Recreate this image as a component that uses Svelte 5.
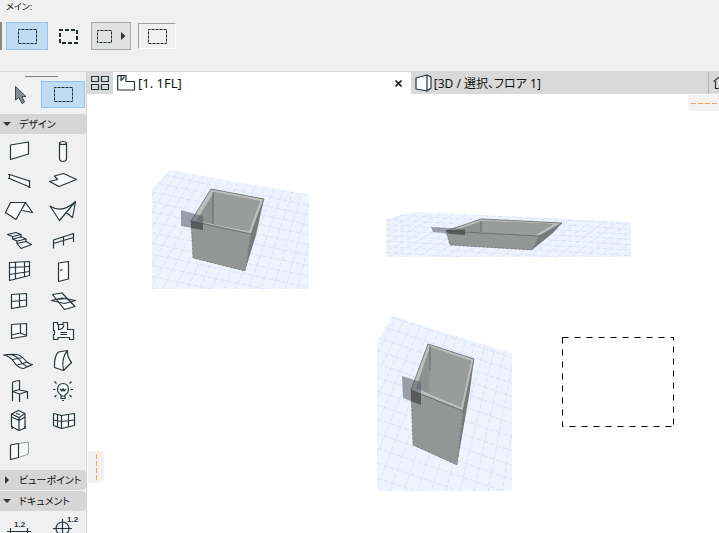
<script>
  // Tool icons are drawn in a 43 x 30 cell.
  const designTools = [
    { name: '壁', d: 'M10.5 9L28.5 6V18L10.5 23.5Z' },
    { name: '柱', d: 'M16.5 7V23Q17 25.5 20 25.5T23.5 23V7M16.5 7Q17 5.5 20 5.5T23.5 7T20 8.5T16.5 7' },
    { name: '梁', d: 'M9.5 8.5L29.5 15V21L9.5 12.5Z', line: 'M8 8.5H10M8 12.5H10M28.5 15H30.5M28.5 21.5H30.5' },
    { name: 'スラブ', d: 'M11.5 10L20.5 7.5L33.5 13.5L16 20.5L6.5 15.5L14.5 13.5Z' },
    { name: '屋根', d: 'M10.5 6.5H25.5L16 23.5L5.5 16.5ZM25.5 6.5L32.5 16.5L22.5 14.5' },
    { name: 'シェル', d: 'M7 10Q19 18 32.5 5.5L16.5 24.5ZM32.5 5.5L29.5 21.5L23 16.5' },
    { name: '階段', d: 'M7.5 8.5L16 6.5L21 8.5L12.5 10.5ZM12.5 13L21.5 11L26 13L17 15ZM17 17.5L26 15.5L31.5 18.5L21 22.5Z', line: 'M12.5 10.5V13M21 8.5V11M17 15V17.5M26 13V15.5' },
    { name: '手摺り', line: 'M10.5 22.5V14L30.5 7.5V16M20.5 10.5V19.5M10.5 17.5L30.5 11.5' },
    { name: 'カーテンウォール', d: 'M9.5 6.5L29.5 5.5V19.5L9.5 24.5Z', line: 'M15.5 6V23M24.5 6V21M9.5 11.5L29.5 10.5M9.5 18.5L29.5 15.5' },
    { name: 'ドア', d: 'M15.5 7L25.5 5.5V23L15.5 25.5Z', line: 'M17 14.5L19.5 13.5' },
    { name: '窓', d: 'M11.5 8.5L26.5 7.5V20L11.5 22.5Z', line: 'M19.5 8V21M11.5 15.5L26.5 14' },
    { name: '天窓', d: 'M9.5 8.5L19 7L32 20.5L21.5 23.5Z', line: 'M8.5 14.5L19 12L32.5 14.5L21.5 17.5ZM14 13.5L24 12.5' },
    { name: 'コーナー窓', d: 'M11.5 8.5L26.5 7.5V20L11.5 22.5Z', line: 'M20.5 8V17L11.5 19M20.5 17L26.5 19.5' },
    { name: 'ゾーン', d: 'M10.5 6.5H14.5V8.5H20V6.5H24.5V13.5H30.5V23.5H26.5V21.5H15V23.5H10.5V18.5H11.5V14.5H10.5Z', line: 'M15.5 9V13.5Q20.5 13.5 21 8.5M17.5 16.5H24M17.5 18.5H24' },
    { name: 'メッシュ', d: 'M3.5 9Q10 8 16 8.5Q21 9 24.5 13.5T32.5 18.5L23.5 22.5Q18 22 14 16T3.5 9Z', line: 'M9 8.5Q16 9 20 14.5T28 20.5M12.5 13.5L23 11.5M17.5 19L27.5 16' },
    { name: 'モルフ', d: 'M11.5 21.5Q11 10 15.5 6L24.5 4.5Q24 11 28.5 16.5L20.5 24.5Z', line: 'M24.5 4.5Q18 12 20.5 24.5' },
    { name: 'オブジェクト', line: 'M12.5 25V7Q13 5 19.5 4.5V14L27.5 15.5V23M12.5 15.5L19.5 18L27.5 15.5M19.5 18V26M12.5 15.5L19.5 13.5' },
    { name: 'ランプ', d: 'M18 22.5V19Q14.5 17 14.5 13Q15 7.5 20 7.5T25.5 13Q25.5 17 22 19V22.5Z', line: 'M18 20H22M17 13L19 15L20 12.5L21 15L23 13M10 13.5H12.5M27.5 13.5H30M11.5 5.5L13.5 7.5M28.5 5.5L26.5 7.5M11.5 21L13.5 19M28.5 21L26.5 19M19 24.5H21' },
    { name: '設備', d: 'M11.5 8L18.5 4.5L25 7.5V22L19 24.5L11.5 20.5Z', line: 'M11.5 8L19 11.5L25 7.5M11.5 11L19 14.5L25 11M19 11.5V24.5M12 20V23M25 20V23M16 7.5L20 8.5' },
    { name: 'コーナーカーテンウォール', d: 'M10.5 7.5L18.5 9.5L31.5 7.5V19.5L18.5 22.5L10.5 19.5Z', line: 'M18.5 9.5V22.5M14.5 8.5V21M25.5 8.5V21M10.5 14L18.5 15.5L31.5 14' },
    { name: '開口', d: 'M10.5 9L18.5 7.5V21.5L10.5 23.5Z', soft: 'M18.5 7.5L28.5 6V18L18.5 21.5' }
  ];

  const line = (a, b) => `M${a[0]} ${a[1]}L${b[0]} ${b[1]}`;

  // Perspective floor grid: one set of lines along the far edge, one fanning towards the viewer.
  function floorGrid(w, h, step, slope, lean, fan, cols) {
    let along = '';
    for (let y = -h, gap = step; y < h * 1.6; y += gap, gap += step / 40) {
      along += line([0, y], [w, y + w * slope]);
    }
    let across = '';
    for (let i = 0; i <= cols; i++) {
      const x = (i / cols) * w * 2;
      across += line([x, 0], [x - lean + (x / w) * fan, h]);
    }
    return { along, across };
  }

  const views = [
    {
      id: 'v1', x: 65, y: 75, w: 157, h: 120,
      floor: '18,1 157,26 157,120 0,120 0,19',
      grid: floorGrid(157, 120, 7, 0.21, 88, 52, 34),
      outer: '59,20 112,30 99,65 39,52', inner: '62,23 108,32 97,62 44,52',
      front: '39,52 99,65 93,102 41,89', side: '99,65 112,30 104,66 93,102',
      back: '62,23 108,32 97,62 60,55', corner: 'M61 23V55',
      plane: '29,41 51,47 51,61 29,57', overlap: '39,52 51,54 51,61 39,59'
    },
    {
      id: 'v2', x: 299, y: 117, w: 245, h: 46,
      floor: '0,8 27,1 245,11 245,46 0,46',
      grid: floorGrid(245, 46, 4, 0.06, 95, 35, 40),
      outer: '95,8 176,12 153,25 60,20', inner: '96,10 168,13 149,24 67,20',
      front: '60,20 153,25 146,39 64,34', side: '153,25 176,12 167,22 146,39',
      back: '95,10 168,13 149,24 94,21', corner: 'M95 10V21',
      plane: '45,16 79,18 79,24 47,21', overlap: '61,19 79,19 79,24 63,23'
    },
    {
      id: 'v3', x: 290, y: 222, w: 135, h: 175,
      floor: '15,0 135,37 135,175 0,175 0,26',
      grid: floorGrid(135, 175, 9, 0.34, 100, 62, 28),
      outer: '51,28 97,43 86,95 34,74', inner: '53,31 94,45 84,91 39,72',
      front: '34,74 86,95 80,149 36,129', side: '86,95 97,43 93,74 80,149',
      back: '53,31 94,45 84,91 52,78', corner: 'M53 30V55',
      plane: '25,60 44,66 44,89 26,82', overlap: '34,74 44,78 44,89 34,85'
    }
  ];
</script>

{#snippet marquee(w, h, weight)}
  <svg width={w} height={h} viewBox="0 0 {w} {h}" aria-hidden="true">
    <rect x={weight / 2} y={weight / 2} width={w - weight} height={h - weight} fill="none" stroke="#1d2a30" stroke-width={weight} stroke-dasharray={weight > 1 ? '4 2' : '3 1'} stroke-dashoffset="1" />
  </svg>
{/snippet}

<div class="app">
  <header class="toolbar">
    <div class="caption">メイン:</div>
    <div class="options">
      <button class="option chosen" aria-label="選択範囲">{@render marquee(19, 15, 1)}</button>
      <button class="option flat" aria-label="太い選択範囲">{@render marquee(19, 15, 2)}</button>
      <button class="option menu" aria-label="選択方法">
        {@render marquee(15, 13, 1)}
        <svg width="5" height="8" viewBox="0 0 5 8" aria-hidden="true"><path d="M0 0L4.5 4L0 8Z" fill="#333" /></svg>
      </button>
      <button class="option sunken" aria-label="矩形">{@render marquee(19, 15, 1)}</button>
    </div>
  </header>

  <div class="body">
    <aside class="palette">
      <div class="grip"></div>
      <div class="pair">
        <button class="pick" aria-label="矢印">
          <svg width="13" height="20" viewBox="0 0 13 20" aria-hidden="true">
            <path d="M1.5 1.5V15L5 12.5L8 18.5L10.5 17L8 11.5H12Z" fill="#858b8e" stroke="#3f4a50" />
          </svg>
        </button>
        <button class="pick chosen" aria-label="選択範囲ツール">{@render marquee(19, 15, 1)}</button>
      </div>

      <button class="section"><span class="arrow down"></span>デザイン</button>
      <div class="tools design">
        {#each designTools as tool}
          <button class="tool" aria-label={tool.name}>
            <svg width="43" height="30" viewBox="0 0 43 30" aria-hidden="true">
              {#if tool.soft}<path d={tool.soft} class="soft" />{/if}
              {#if tool.d}<path d={tool.d} class="ink face" />{/if}
              {#if tool.line}<path d={tool.line} class="ink" />{/if}
            </svg>
          </button>
        {/each}
      </div>
      <button class="section"><span class="arrow right"></span>ビューポイント</button>
      <button class="section"><span class="arrow down"></span>ドキュメント</button>
      <div class="tools">
        <button class="tool" aria-label="寸法">
          <svg width="43" height="30" viewBox="0 0 43 30" aria-hidden="true">
            <text x="14" y="14">1.2</text>
            <path d="M7 18.5H31M10.5 15V22M27.5 15V22" class="ink" />
          </svg>
        </button>
        <button class="tool" aria-label="レベル寸法">
          <svg width="43" height="30" viewBox="0 0 43 30" aria-hidden="true">
            <path d="M10 15.5H29M19.5 6V26M26 15.5A6.5 6.5 0 1 1 13 15.5A6.5 6.5 0 1 1 26 15.5" class="ink" />
            <text x="24" y="9">1.2</text>
          </svg>
        </button>
      </div>
    </aside>

    <main class="work">
      <nav class="tabs">
        <button class="overview" aria-label="タブ一覧">
          <svg width="18" height="14" viewBox="0 0 18 14" aria-hidden="true">
            <path d="M.5 .5H7.5V5.5H.5ZM10.5 .5H17.5V5.5H10.5ZM.5 8.5H7.5V13.5H.5ZM10.5 8.5H17.5V13.5H10.5Z" class="ink" />
          </svg>
        </button>
        <div class="tab active">
          <button class="title">
            <svg width="19" height="16" viewBox="0 0 19 16" aria-hidden="true">
              <path d="M.7 .7H9V6.5H17.5V15H.7ZM4 1V5.5L7.5 2" class="ink" />
            </svg>
            [1. 1FL]
          </button>
          <button class="close" aria-label="閉じる">
            <svg width="7" height="7" viewBox="0 0 7 7" aria-hidden="true"><path d="M.5 .5L6.5 6.5M6.5 .5L.5 6.5" stroke="#222" stroke-width="1.6" /></svg>
          </button>
        </div>
        <button class="tab title model">
          <svg width="17" height="18" viewBox="0 0 17 18" aria-hidden="true">
            <path d="M1 4L12 1L16 3V14L12 17L1 15ZM12 1V17" class="ink face" />
          </svg>
          [3D / 選択、フロア 1]
        </button>
        <button class="tab next" aria-label="立面図">
          <svg width="14" height="14" viewBox="0 0 14 14" aria-hidden="true"><path d="M.5 5.5L7 .5L13.5 5.5M2.5 5V12.5H12" class="ink" /></svg>
        </button>
      </nav>

      <div class="canvas">
        {#each views as v}
          <svg class="view" style="left: {v.x}px; top: {v.y}px" width={v.w} height={v.h} viewBox="0 0 {v.w} {v.h}" role="img" aria-label="3D">
            <clipPath id={v.id}><polygon points={v.floor} /></clipPath>
            <g clip-path="url(#{v.id})">
              <rect width={v.w} height={v.h} fill="#eef3fe" />
              <path d={v.grid.along} class="grid" />
              <path d={v.grid.across} class="grid" />
            </g>
            <polygon points={v.side} fill="#777b7b" />
            <polygon points={v.front} fill="#929695" />
            <polygon points={v.outer} fill="#bbbfbe" stroke="#626766" stroke-width=".8" />
            <polygon points={v.inner} fill="#8d9190" />
            <polygon points={v.back} fill="#989c9b" />
            <path d={v.corner} stroke="#656a69" fill="none" />
            <polygon points={v.front} class="edge" />
            <polygon points={v.plane} fill="#555962" fill-opacity=".55" />
            <polygon points={v.overlap} fill="#454747" fill-opacity=".55" />
          </svg>
        {/each}
        <svg class="view selection" width="113" height="91" viewBox="0 0 113 91" role="img" aria-label="選択範囲">
          <path d="M.5 .5H111.5V89.5" />
          <path d="M.5 .5V89.5H111.5" />
        </svg>
        <div class="dock side"></div>
        <div class="dock top"></div>
      </div>
    </main>
  </div>
</div>

<style>
  :global(body) { margin: 0; }
  .app {
    display: flex;
    flex-direction: column;
    height: 100vh;
    overflow: hidden;
    background: #f0f0f0;
    color: #111;
    font-family: "Noto Sans", "Noto Sans CJK JP", sans-serif;
    font-size: 13px;
    font-feature-settings: "palt";
  }
  button {
    padding: 0;
    border: 0;
    background: none;
    color: inherit;
    font: inherit;
    font-feature-settings: inherit;
    box-sizing: border-box;
  }
  svg { display: block; flex: none; }
  .toolbar {
    flex: none;
    height: 72px;
    box-sizing: border-box;
    border-bottom: 1px solid #d8d8d8;
  }
  .caption {
    height: 22px;
    padding-left: 6px;
    font-size: 9px;
    line-height: 13px;
    box-sizing: border-box;
  }
  .options {
    display: flex;
    align-items: center;
    height: 28px;
    padding-left: 4px;
    border-left: 2px solid #8b8b8b;
  }
  .option {
    display: flex;
    align-items: center;
    justify-content: center;
    width: 42px;
    height: 28px;
    flex: none;
  }
  .chosen { background: #c0dcf3; border: 1px solid #8cc4f5; }
  .flat { width: 41px; }
  .menu {
    width: 40px;
    gap: 9px;
    margin: 0 7px 0 2px;
    background: #e1e1e1;
    border: 1px solid #a9a9a9;
  }
  .sunken {
    width: 38px;
    height: 26px;
    border: 1px solid #a0a0a0;
    border-right-color: #fff;
    border-bottom-color: #fff;
  }
  .body { display: flex; flex: 1; min-height: 0; }
  .palette {
    flex: none;
    width: 87px;
    box-sizing: border-box;
    border-right: 1px solid #d2d2d2;
    overflow: hidden;
  }
  .grip { width: 33px; height: 1px; margin: 4px 0 4px 25px; background: #808080; }
  .pair { display: flex; height: 27px; margin-bottom: 6px; }
  .pick { display: flex; align-items: center; justify-content: center; width: 41px; height: 27px; }
  .pick.chosen { width: 44px; }
  .section {
    display: flex;
    align-items: center;
    width: 100%;
    height: 20px;
    margin-bottom: 1px;
    background: #d6d6d6;
    border-radius: 0 4px 4px 0;
    font-size: 10px;
    line-height: 20px;
    white-space: nowrap;
  }
  .arrow { width: 7px; margin: 0 9px 0 3px; flex: none; }
  .arrow::before { content: ""; display: block; width: 0; margin: auto; }
  .down::before { border: solid transparent; border-width: 4px 4px 0; border-top-color: #333; }
  .right::before { border: solid transparent; border-width: 4px 0 4px 4px; border-left-color: #333; }
  .tools { display: grid; grid-template-columns: 43px 43px; padding-top: 1px; }
  .design { padding-bottom: 4px; }
  .tool { height: 30px; }
  .ink { fill: none; stroke: #26343b; stroke-width: 1.2; stroke-linejoin: round; }
  .face { fill: #fafafa; }
  .soft { fill: #f7f7f7; stroke: #959b9e; }
  .tool text { font: bold 8px "Liberation Sans", sans-serif; fill: #26343b; }
  .work { display: flex; flex-direction: column; flex: 1; min-width: 0; }
  .tabs { display: flex; height: 22px; flex: none; background: #d9d9d9; }
  .overview { display: flex; align-items: center; justify-content: center; width: 26px; flex: none; }
  .tab { display: flex; align-items: center; flex: 1 1 50%; min-width: 0; box-sizing: border-box; }
  .active { background: #fff; padding: 0 8px 0 4px; }
  .title { display: flex; align-items: center; gap: 2px; flex: 1; text-align: left; white-space: nowrap; }
  .model { flex: 1 1 50%; padding-left: 4px; font-size: 12px; }
  .close { width: 9px; height: 9px; display: flex; align-items: center; justify-content: center; }
  .next { flex: 0 0 11px; padding-left: 4px; border-left: 1px solid #b5b5b5; overflow: hidden; }
  .canvas { position: relative; flex: 1; background: #fff; overflow: hidden; }
  .view { position: absolute; }
  .grid { fill: none; stroke: #cfdefb; stroke-width: .7; stroke-dasharray: 5 2; }
  .edge { fill: none; stroke: #626766; stroke-width: .6; stroke-dasharray: 3 1; }
  .selection { left: 475px; top: 243px; fill: none; stroke: #000; stroke-dasharray: 6 6; }
  .dock { position: absolute; background: #f2f2f2; }
  .side { left: 1px; top: 357px; width: 16px; height: 32px; border-radius: 0 4px 4px 0; }
  .side::before {
    content: "";
    position: absolute;
    left: 8px;
    top: 3px;
    width: 1px;
    height: 26px;
    background: repeating-linear-gradient(#ffa24d 0 5px, transparent 5px 7px);
  }
  .top { right: 0; top: 1px; width: 31px; height: 16px; border-radius: 0 0 0 4px; }
  .top::before {
    content: "";
    position: absolute;
    left: 3px;
    top: 8px;
    width: 26px;
    height: 1px;
    background: repeating-linear-gradient(90deg, #ffa24d 0 5px, transparent 5px 7px);
  }
</style>
